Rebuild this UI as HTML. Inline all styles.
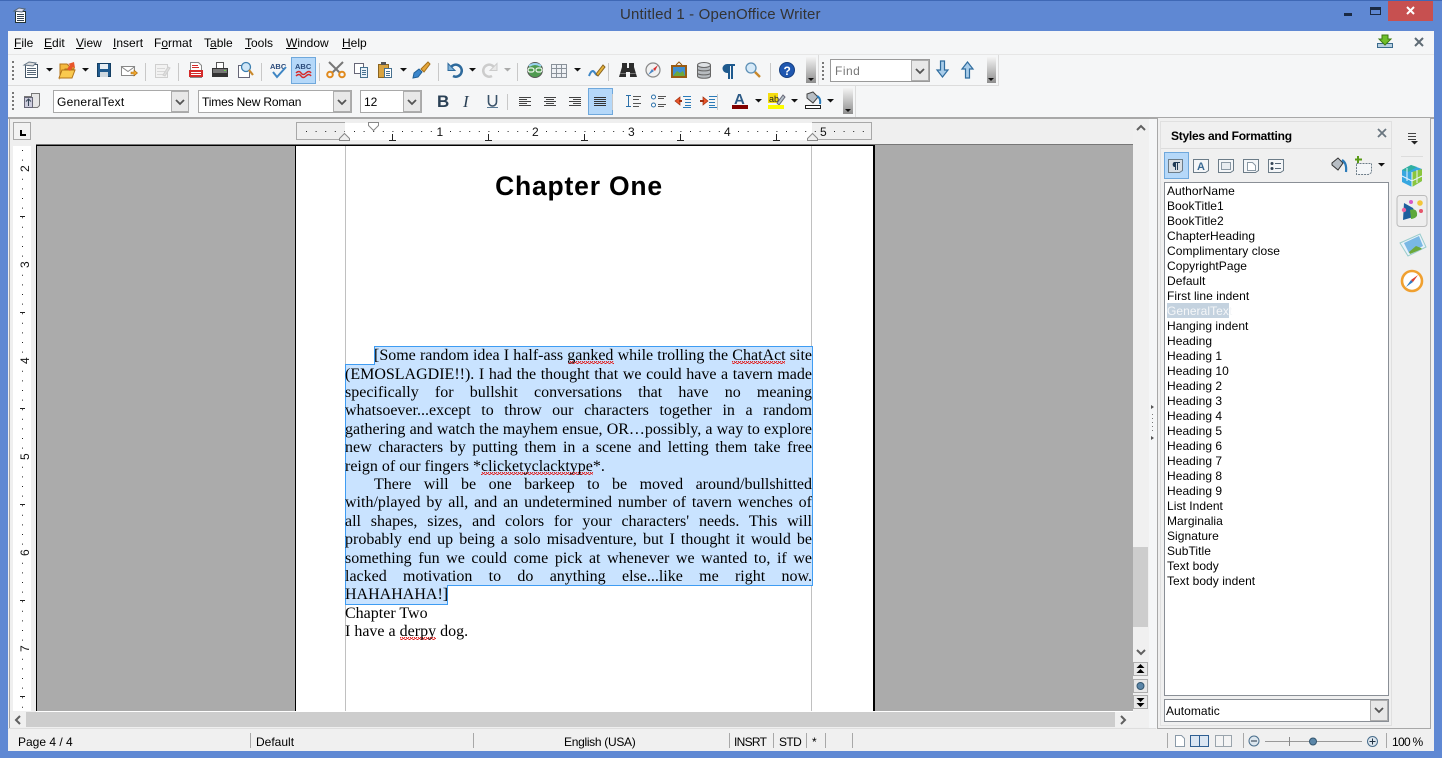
<!DOCTYPE html>
<html><head><meta charset="utf-8"><title>Untitled 1 - OpenOffice Writer</title>
<style>
html,body{margin:0;padding:0;width:1442px;height:758px;overflow:hidden;background:#5f88d3}
*{box-sizing:border-box}
div,span,svg{position:absolute}
span.n{position:static}
.t{font:12px/15px "Liberation Sans",sans-serif;color:#000;white-space:nowrap}
.m{top:36px}
u{text-decoration:underline}
.l{position:absolute;left:345px;width:467px;font:16px/18px "Liberation Serif",serif;color:#000;white-space:nowrap}
.j{white-space:normal;text-align:justify;text-align-last:justify}
.s{left:1167px;font:12px/15px "Liberation Sans",sans-serif;letter-spacing:.05px;white-space:nowrap;color:#000}
.combo{background:#fff;border:1px solid #a9a9a9;font:12px/22px "Liberation Sans",sans-serif;padding-left:3px;white-space:nowrap}
.arrowbox{width:18px;background:#e8e8e8;border:1px solid #adadad}
.hd{background:linear-gradient(#f4f4f4,#8e8e8e)}
.sb{top:733px;height:15px;width:1px;background:#a8a8a8}
.grip{width:2px;border-left:2px dotted #777}
</style></head><body>
<!-- title -->
<div style="left:0;top:0;width:1442px;height:1px;background:#3f68b5"></div>
<svg style="left:12px;top:6px" width="16" height="18" viewBox="0 0 16 18"><path d="M3.500 5.500h10v11h-10z" fill="#fff" stroke="#233"/><path d="M5 8.500h7M5 10.500h7M5 12.500h7M5 14.500h7" stroke="#345"/><path d="M2 5l5-3 6 1-3 3z" fill="#dde" stroke="#567"/></svg>
<div class="t" style="left:620px;top:6px;font-size:15px;line-height:18px;color:#333;letter-spacing:.15px">Untitled 1 - OpenOffice Writer</div>
<div style="left:1344px;top:13px;width:8px;height:3px;background:#1a2a44"></div>
<div style="left:1370px;top:7px;height:8px;border:1.5px solid #1a2a44;border-top-width:3px;width:11px"></div>
<div style="left:1388px;top:1px;width:45px;height:20px;background:#c75050"></div>
<svg style="left:1405px;top:5px" width="12" height="12" viewBox="0 0 12 12"><path d="M2 2l7 7M9 2l-7 7" stroke="#fff" stroke-width="2"/></svg>

<!-- client -->
<div style="left:8px;top:31px;width:1426px;height:720px;background:#f0f0f0"></div>
<div style="left:8px;top:31px;width:1426px;height:23px;background:#f5f6f7"></div>
<div style="left:8px;top:54px;width:1426px;height:1px;background:#e6e6e6"></div>
<div style="left:8px;top:55px;width:1426px;height:62px;background:#f5f6f7"></div>
<div style="left:8px;top:85px;width:990px;height:1px;background:#dcdcdc"></div>
<div style="left:818px;top:55px;width:1px;height:30px;background:#dcdcdc"></div>
<div style="left:998px;top:55px;width:1px;height:31px;background:#dcdcdc"></div>
<div style="left:855px;top:86px;width:1px;height:31px;background:#dcdcdc"></div>
<div style="left:8px;top:117px;width:1426px;height:2px;background:#a8a8a8"></div>

<!-- menu -->
<div class="t m" style="left:14px"><u>F</u>ile</div>
<div class="t m" style="left:44px"><u>E</u>dit</div>
<div class="t m" style="left:76px"><u>V</u>iew</div>
<div class="t m" style="left:113px"><u>I</u>nsert</div>
<div class="t m" style="left:154px">F<u>o</u>rmat</div>
<div class="t m" style="left:204px">T<u>a</u>ble</div>
<div class="t m" style="left:245px"><u>T</u>ools</div>
<div class="t m" style="left:286px"><u>W</u>indow</div>
<div class="t m" style="left:342px"><u>H</u>elp</div>
<svg style="left:1376px;top:33px" width="18" height="16" viewBox="0 0 18 16"><path d="M1.500 10.500h15v4h-15z" fill="#b8cfe0" stroke="#3a6a8c"/><path d="M6 2h6v4h3l-6 6-6-6h3z" fill="#6fbf2a" stroke="#3d7a12"/></svg>
<svg style="left:1414px;top:37px" width="10" height="10" viewBox="0 0 10 10"><path d="M1 1l8 8M9 1l-8 8" stroke="#5f6b75" stroke-width="2"/></svg>

<!-- toolbar 1 -->
<div class="grip" style="left:12px;top:61px;height:19px"></div>
<svg style="left:0;top:55px" width="1000" height="30" viewBox="0 55 1000 30">
<path d="M25.500 64.500h12v13h-12z" fill="#fff" stroke="#456"/><path d="M27 68.500h9M27 70.500h9M27 72.500h9M27 74.500h9" stroke="#567"/><path d="M24 65l5-3 7 1-3 3z" fill="#ddd" stroke="#678"/>
<path d="M46 68h7l-3.500 3.500z" fill="#111"/>
<path d="M60 64h7l2 2h5v3H65l-5 9z" fill="#f4b93e" stroke="#b3741a"/><path d="M62 70h13l-3 8H59z" fill="#f9c94f" stroke="#b3741a"/><path d="M67 69l3-4-2-1 6-2 1 6-2-1-3 4z" fill="#e8552a"/>
<path d="M82 68h7l-3.500 3.500z" fill="#111"/>
<path d="M97.500 63.500h13v13h-13z" fill="#1f5a8e" stroke="#143e63"/><path d="M100 64h8v5h-8z" fill="#e8eef3"/><path d="M100 72h8v5h-8z" fill="#cfd8df"/>
<path d="M121.500 66.500h13v9h-13z" fill="#fff" stroke="#888"/><path d="M121 66.500l7 5 7-5" fill="none" stroke="#888"/><path d="M131 72h3v-2l3.500 3-3.500 3v-2h-3z" fill="#f0a830" stroke="#a86a10" stroke-width=".6"/>
<path d="M145.500 63v18" stroke="#c8c8c8"/>
<path d="M155.500 64.500h12v13h-12z" fill="#f2f2f2" stroke="#cfcfcf"/><path d="M157 68.500h8M157 71.500h8M157 74.500h6" stroke="#d8d8d8"/><path d="M163 75l5-8 2 1-5 8z" fill="#dfdfdf" stroke="#cfcfcf"/>
<path d="M178.500 63v18" stroke="#c8c8c8"/>
<path d="M190.500 62.500h8l3 3v12h-11z" fill="#fff" stroke="#888"/><path d="M189 70h14v7h-14z" fill="#d42a2a"/><path d="M192 65.500h6M192 67.500h7" stroke="#d42a2a"/><path d="M191 72.500h10M191 74.500h10" stroke="#fff"/>
<path d="M216.500 62.500h7v6h-7z" fill="#fff" stroke="#555"/><path d="M212.500 68.500h15v8h-15z" fill="#777" stroke="#333"/><path d="M213 73h14v4h-14z" fill="#333"/><path d="M224 70h2v1h-2z" fill="#6ad04a"/>
<path d="M238.500 65.500h9l2 2v10h-11z" fill="#fff" stroke="#667"/><circle cx="246" cy="67" r="4.500" fill="#cfe6f7" stroke="#3c7fb1" stroke-width="1.300"/><path d="M249 70l4 5" stroke="#c9882b" stroke-width="2.200"/>
<path d="M261.500 63v18" stroke="#c8c8c8"/>
<text x="270" y="69" font-family="Liberation Sans" font-size="7.500" font-weight="bold" fill="#2a4a7a">ABC</text><path d="M273 72l4 5 9-10" fill="none" stroke="#3f86c4" stroke-width="2"/>
<rect x="291.500" y="57.500" width="24" height="26" fill="#b5d8f9" stroke="#6fa8dc"/>
<text x="295" y="69" font-family="Liberation Sans" font-size="7.500" font-weight="bold" fill="#2a4a7a">ABC</text><path d="M296 73q3-3 5 0t5 0 5 0M296 76q3-3 5 0t5 0 5 0" fill="none" stroke="#d62a2a" stroke-width="1.500"/>
<path d="M319.500 63v18" stroke="#c8c8c8"/>
<path d="M329 62l11 11M343 62l-11 11" stroke="#777" stroke-width="2"/><circle cx="330" cy="74.500" r="2.800" fill="none" stroke="#e08a1e" stroke-width="2"/><circle cx="342" cy="74.500" r="2.800" fill="none" stroke="#e08a1e" stroke-width="2"/>
<path d="M354.500 63.500h9v10h-9z" fill="#fff" stroke="#667"/><path d="M360.500 67.500h7v10h-7z" fill="#eaf2fa" stroke="#46708f"/><path d="M362 70.500h4M362 72.500h4M362 74.500h4" stroke="#46708f"/>
<path d="M378.500 64.500h10v13h-10z" fill="#d9a441" stroke="#8a6420"/><path d="M381 62h5v3h-5z" fill="#555"/><path d="M384.500 68.500h7v9h-7z" fill="#fff" stroke="#46708f"/><path d="M386 71.500h4M386 73.500h4M386 75.500h4" stroke="#46708f"/>
<path d="M400 68h7l-3.500 3.500z" fill="#111"/>
<path d="M414 73l5-4 3 3-4 5-5 1z" fill="#3b86cc" stroke="#1f5f96"/><path d="M421 69l7-7 2 2-6 8z" fill="#e5a63a" stroke="#a5701a"/>
<path d="M438.500 63v18" stroke="#c8c8c8"/>
<path d="M450 69a6 6 0 1 1 3 7" fill="none" stroke="#2e6a9c" stroke-width="2.500"/><path d="M448 63.500v7h7z" fill="#7fb3da" stroke="#2e6a9c"/>
<path d="M469 68h7l-3.500 3.500z" fill="#111"/>
<path d="M495 69a6 6 0 1 0-3 7" fill="none" stroke="#ccc" stroke-width="2.500"/><path d="M497 63.500v7h-7z" fill="#e8e8e8" stroke="#ccc"/>
<path d="M504 68h7l-3.500 3.500z" fill="#aaa"/>
<path d="M517.500 63v18" stroke="#c8c8c8"/>
<circle cx="535" cy="70" r="7.500" fill="#4f9a50" stroke="#555"/><path d="M529 66q6-4 12 0" fill="none" stroke="#9ad2ee" stroke-width="2"/><rect x="528" y="68" width="6" height="4" rx="2" fill="none" stroke="#e8f4e8" stroke-width="1.300"/><rect x="536" y="68" width="6" height="4" rx="2" fill="none" stroke="#e8f4e8" stroke-width="1.300"/>
<path d="M551.500 64.500h15v13h-15z" fill="#eef1f5" stroke="#8a929a"/><path d="M551 68.500h16M551 73.500h16M556.500 64v14M561.500 64v14" stroke="#8a929a"/>
<path d="M574 68h7l-3.500 3.500z" fill="#111"/>
<path d="M589 76q3-8 6-3t4-2" fill="none" stroke="#3d86c6" stroke-width="2"/><path d="M596 74l7-9 2 2-7 9z" fill="#e6b43c" stroke="#8a6420"/>
<path d="M608.500 63v18" stroke="#c8c8c8"/>
<path d="M622 63h5v5h2v-5h5v4l3 10h-7v-5h-4v5h-7l3-10z" fill="#2d2d2d"/><path d="M620 73.500h6M630 73.500h6" stroke="#777"/>
<circle cx="653" cy="70" r="7" fill="#f1f1f1" stroke="#888" stroke-width="1.200"/><path d="M648 75l4-6 2 2z" fill="#4a86c5"/><path d="M658 65l-5 4 2 2z" fill="#d83030"/>
<path d="M672 66h14v11h-14z" fill="#3f8fd0" stroke="#9a5b12" stroke-width="2"/><path d="M673 76l4-5 3 2 3-2 2 5z" fill="#6da83a"/><path d="M676 65l3-3 3 3" fill="none" stroke="#9a5b12"/>
<path d="M697.500 65v11c0 3 13 3 13 0V65" fill="#b8bcc0" stroke="#666"/><ellipse cx="704" cy="65" rx="6.500" ry="2.500" fill="#dfe2e5" stroke="#666"/><path d="M697.500 69c0 2.500 13 2.500 13 0M697.500 73c0 2.500 13 2.500 13 0" fill="none" stroke="#666"/>
<path d="M735 64h-8a4.500 4.500 0 0 0 0 9h1v6h2V66h1v13h2V66h2z" fill="#1f5a8e"/>
<circle cx="751" cy="68" r="5" fill="#d5e9f8" stroke="#5d8fb5" stroke-width="1.300"/><path d="M755 72l5 5" stroke="#c9882b" stroke-width="2.400"/>
<path d="M770.500 63v18" stroke="#c8c8c8"/>
<circle cx="787" cy="70" r="7.500" fill="#1f57b0" stroke="#153e80"/><text x="783.500" y="75" font-family="Liberation Sans" font-size="12" font-weight="bold" fill="#fff">?</text>
</svg>
<div class="hd" style="left:806px;top:57px;width:10px;height:26px"></div>
<svg style="left:807px;top:77px" width="8" height="5"><path d="M1 1h6l-3 3z" fill="#111"/></svg>
<div class="grip" style="left:822px;top:62px;height:18px"></div>
<div class="combo" style="left:830px;top:59px;width:100px;height:23px;border-color:#9a9a9a;color:#777;letter-spacing:.5px;padding-left:4px">Find</div>
<div class="arrowbox" style="left:911px;top:60px;height:21px"></div>
<svg style="left:915px;top:68px" width="10" height="7"><path d="M1 1l4 4 4-4" fill="none" stroke="#555" stroke-width="1.800"/></svg>
<svg style="left:935px;top:60px" width="44" height="20" viewBox="0 0 44 20"><path d="M5.500 1h4v9h3.500l-5.500 7-5.500-7h3.500z" fill="#a9cdea" stroke="#2f6c9e" stroke-width="1.200"/><path d="M30.500 18h4V9H38L32.500 2 27 9h3.500z" fill="#a9cdea" stroke="#2f6c9e" stroke-width="1.200"/></svg>
<div class="hd" style="left:987px;top:57px;width:9px;height:26px"></div>
<svg style="left:987px;top:77px" width="8" height="5"><path d="M1 1h6l-3 3z" fill="#111"/></svg>

<!-- toolbar 2 -->
<div class="grip" style="left:12px;top:92px;height:18px"></div>
<svg style="left:0;top:86px" width="860" height="31" viewBox="0 86 860 31">
<path d="M24.500 96.500h7v-3h8v12l-2 2h-13z" fill="#e6e6e6" stroke="#777"/><path d="M24.500 97.500h8v10h-8z" fill="#ccd" stroke="#667"/><path d="M28.500 99v7M26 101.500l2.500-2.500 2.500 2.500" stroke="#345" fill="none"/>
<text x="437" y="107" font-family="Liberation Sans" font-size="17" font-weight="bold" fill="#2a4055">B</text>
<text x="463" y="107" font-family="Liberation Serif" font-size="17" font-style="italic" fill="#2a4055">I</text>
<path d="M488.500 95v7a4 4 0 0 0 8 0v-7" fill="none" stroke="#3a5268" stroke-width="1.600"/><path d="M487 107.500h11" stroke="#5a7a95"/>
<path d="M507.500 94v16" stroke="#c8c8c8"/>
<path d="M519 97.500h12M519 99.500h8M519 101.500h12M519 103.500h8M519 105.500h12" stroke="#444"/>
<path d="M544 97.500h12M546 99.500h8M544 101.500h12M546 103.500h8M544 105.500h12" stroke="#444"/>
<path d="M569 97.500h12M573 99.500h8M569 101.500h12M573 103.500h8M569 105.500h12" stroke="#444"/>
<rect x="588.500" y="88.500" width="24" height="26" fill="#b5d8f9" stroke="#6fa8dc"/>
<path d="M594 97.500h12M594 99.500h12M594 101.500h12M594 103.500h12M594 105.500h12" stroke="#333"/>
<path d="M612.500 94v16" stroke="#c8c8c8"/>
<path d="M626 95.500h5M626 106.500h5M628.500 96v10" stroke="#2a6fa8"/><path d="M633 96.500h8M633 99.500h6M633 103.500h8M633 106.500h6" stroke="#555"/>
<circle cx="653.500" cy="97" r="2" fill="#fff" stroke="#2a6fa8"/><circle cx="653.500" cy="105" r="2" fill="#fff" stroke="#2a6fa8"/><path d="M658 96.500h8M658 98.500h6M658 104.500h8M658 106.500h6" stroke="#555"/>
<path d="M675 101l5-4v8z" fill="#e8552a" stroke="#a03010" stroke-width=".7"/><path d="M679 101h3" stroke="#a03010" stroke-width="2"/><path d="M683 96.500h8M685 99.500h6M685 102.500h6M685 105.500h6M683 107.500h8" stroke="#2a7ab8"/>
<path d="M708 101l-5-4v8z" fill="#e8552a" stroke="#a03010" stroke-width=".7"/><path d="M700 101h4" stroke="#a03010" stroke-width="2"/><path d="M709 96.500h8M709 99.500h6M709 102.500h6M709 105.500h6M709 107.500h8" stroke="#2a7ab8"/>
<path d="M717.500 94v16" stroke="#c8c8c8"/>
<text x="734" y="104" font-family="Liberation Sans" font-size="15" font-weight="bold" fill="#2c5a86">A</text><path d="M732 105h16v4h-16z" fill="#800000"/>
<path d="M755 99h7l-3.500 3.500z" fill="#111"/>
<path d="M768 93h10v10h-10z" fill="#f5dc10"/><text x="769" y="102" font-family="Liberation Sans" font-size="9" fill="#222">ab</text><path d="M777 103l6-8 2 2-6 8z" fill="#b5c0c8" stroke="#667"/><path d="M768 105h16v4h-16z" fill="#fcfc00"/>
<path d="M791 99h7l-3.500 3.500z" fill="#111"/>
<path d="M807 94l6-2 5 5-5 6-6-5z" fill="#b8bec4" stroke="#444"/><path d="M817 96q4 2 3 8" fill="none" stroke="#2a7ab8" stroke-width="2"/><path d="M805.500 105.500h15v3h-15z" fill="#fff" stroke="#222"/>
<path d="M827 99h7l-3.500 3.500z" fill="#111"/>
</svg>
<div class="hd" style="left:843px;top:88px;width:10px;height:26px"></div>
<svg style="left:844px;top:108px" width="8" height="5"><path d="M1 1h6l-3 3z" fill="#111"/></svg>

<div class="combo" style="left:53px;top:90px;width:136px;height:23px;letter-spacing:.25px">GeneralText</div>
<div class="combo" style="left:198px;top:90px;width:154px;height:23px;letter-spacing:-.15px">Times New Roman</div>
<div class="combo" style="left:360px;top:90px;width:62px;height:23px">12</div>
<div class="arrowbox" style="left:171px;top:91px;height:21px"></div>
<div class="arrowbox" style="left:333px;top:91px;height:21px"></div>
<div class="arrowbox" style="left:403px;top:91px;height:21px"></div>
<svg style="left:175px;top:99px" width="10" height="7"><path d="M1 1l4 4 4-4" fill="none" stroke="#555" stroke-width="1.800"/></svg>
<svg style="left:337px;top:99px" width="10" height="7"><path d="M1 1l4 4 4-4" fill="none" stroke="#555" stroke-width="1.800"/></svg>
<svg style="left:407px;top:99px" width="10" height="7"><path d="M1 1l4 4 4-4" fill="none" stroke="#555" stroke-width="1.800"/></svg>

<!-- workspace -->
<div style="left:10px;top:119px;width:1138px;height:609px;background:#efefef"></div>
<div style="left:9px;top:119px;width:1px;height:609px;background:#a8a8a8"></div>
<div style="left:1149px;top:119px;width:8px;height:609px;background:#f5f6f7"></div>
<div style="left:13px;top:122px;width:18px;height:18px;background:#f2f2f2;border:1px solid #a8a8a8"></div>
<svg style="left:13px;top:122px" width="18" height="18"><path d="M7 8h2v4h4v2H7z" fill="#000"/></svg>

<!-- h ruler -->
<div style="left:296px;top:122px;width:49px;height:18px;background:#efefef;border:1px solid #a8a8a8;border-right:0"></div>
<div style="left:812px;top:122px;width:60px;height:18px;background:#efefef;border:1px solid #a8a8a8;border-left:0"></div>
<div style="left:345px;top:123px;width:467px;height:17px;background:#fff"></div>
<svg style="left:296px;top:120px" width="580" height="26" viewBox="296 120 580 26">
<line x1="306" y1="131.500" x2="345" y2="131.500" stroke="#222" stroke-dasharray="1 8.600"/>
<line x1="354" y1="131.500" x2="866" y2="131.500" stroke="#222" stroke-dasharray="1 8.600"/>
<path d="M392.500 134v6M389 140.500h7M488.500 134v6M485 140.500h7M584.500 134v6M581 140.500h7M680.500 134v6M677 140.500h7M776.500 134v6M773 140.500h7" fill="none" stroke="#222"/>
<path d="M339.500 140.500v-2l5-5 5 5v2z" fill="#efefef" stroke="#888"/>
<path d="M807.500 140.500v-2l5-5 5 5v2z" fill="#efefef" stroke="#888"/>
<path d="M368.500 122.500h10v3l-5 5-5-5z" fill="#fff" stroke="#888"/>
<rect x="434" y="125" width="11" height="14" fill="#fff"/><rect x="530" y="125" width="11" height="14" fill="#fff"/><rect x="626" y="125" width="11" height="14" fill="#fff"/><rect x="722" y="125" width="11" height="14" fill="#fff"/><rect x="818" y="125" width="11" height="14" fill="#efefef"/>
<text x="436.500" y="136" font-family="Liberation Sans" font-size="12" fill="#111">1</text>
<text x="532" y="136" font-family="Liberation Sans" font-size="12" fill="#111">2</text>
<text x="628" y="136" font-family="Liberation Sans" font-size="12" fill="#111">3</text>
<text x="724" y="136" font-family="Liberation Sans" font-size="12" fill="#111">4</text>
<text x="820" y="136" font-family="Liberation Sans" font-size="12" fill="#111">5</text>
</svg>

<!-- v ruler -->
<div style="left:13px;top:146px;width:18px;height:565px;background:#fff"></div>
<svg style="left:13px;top:146px" width="18" height="565" viewBox="13 146 18 565">
<line x1="22.500" y1="150" x2="22.500" y2="711" stroke="#222" stroke-dasharray="1 8.600"/>
<path d="M20 216.500h5M20 312.500h5M20 408.500h5M20 504.500h5M20 600.500h5M20 696.500h5" stroke="#222"/>
<rect x="16" y="162" width="14" height="12" fill="#fff"/><rect x="16" y="258" width="14" height="12" fill="#fff"/><rect x="16" y="354" width="14" height="12" fill="#fff"/><rect x="16" y="450" width="14" height="12" fill="#fff"/><rect x="16" y="546" width="14" height="12" fill="#fff"/><rect x="16" y="642" width="14" height="12" fill="#fff"/>
<text transform="translate(29 172) rotate(-90)" font-family="Liberation Sans" font-size="12" fill="#111">2</text>
<text transform="translate(29 268) rotate(-90)" font-family="Liberation Sans" font-size="12" fill="#111">3</text>
<text transform="translate(29 364) rotate(-90)" font-family="Liberation Sans" font-size="12" fill="#111">4</text>
<text transform="translate(29 460) rotate(-90)" font-family="Liberation Sans" font-size="12" fill="#111">5</text>
<text transform="translate(29 556) rotate(-90)" font-family="Liberation Sans" font-size="12" fill="#111">6</text>
<text transform="translate(29 652) rotate(-90)" font-family="Liberation Sans" font-size="12" fill="#111">7</text>
</svg>

<!-- doc -->
<div style="left:36px;top:144px;width:1097px;height:567px;background:#ababab"></div>
<div style="left:36px;top:144px;width:1097px;height:1px;background:#777"></div>
<div style="left:36px;top:145px;width:839px;height:1px;background:#000"></div>
<div style="left:36px;top:146px;width:1px;height:565px;background:#000"></div>
<div style="left:295px;top:146px;width:578px;height:565px;background:#fff;border-left:1px solid #000"></div>
<div style="left:873px;top:145px;width:2px;height:566px;background:#000"></div>
<div style="left:36px;top:711px;width:1097px;height:1px;background:#fff"></div>
<div style="left:345px;top:146px;width:1px;height:565px;background:#c0c0c0"></div>
<div style="left:811px;top:146px;width:1px;height:565px;background:#c0c0c0"></div>
<svg style="left:340px;top:340px" width="480" height="310" viewBox="340 340 480 310">
<defs><pattern id="w" width="4" height="3" patternUnits="userSpaceOnUse"><path d="M0 2.500L1 .5 2 .5 3 2.500 4 2.500" fill="none" stroke="#e02020" stroke-width="1"/></pattern></defs>
<path d="M374.500 346.500H812.500V585.500H447.500V604.500H345.500V364.500H374.500Z" fill="#c9e3ff" stroke="#3f9cf2"/>
<g transform="translate(0 0)"><rect x="568" y="361" width="46" height="3" fill="url(#w)"/><rect x="732" y="361" width="53" height="3" fill="url(#w)"/><rect x="481" y="472" width="112" height="3" fill="url(#w)"/><rect x="400" y="637" width="36" height="3" fill="url(#w)"/></g>
</svg>
<div style="left:345px;top:171px;width:468px;text-align:center;font:bold 26.500px/30px 'Liberation Sans',sans-serif;color:#000;letter-spacing:.8px;white-space:nowrap">Chapter One</div>
<div class="l j" style="top:347px;left:374px;width:438px">[Some random idea I half-ass ganked while trolling the ChatAct site</div>
<div class="l j" style="top:366px">(EMOSLAGDIE!!). I had the thought that we could have a tavern made</div>
<div class="l j" style="top:384px">specifically for bullshit conversations that have no meaning</div>
<div class="l j" style="top:402px">whatsoever...except to throw our characters together in a random</div>
<div class="l j" style="top:421px">gathering and watch the mayhem ensue, OR…possibly, a way to explore</div>
<div class="l j" style="top:439px">new characters by putting them in a scene and letting them take free</div>
<div class="l" style="top:458px">reign of our fingers *clicketyclacktype*.</div>
<div class="l j" style="top:476px;left:374px;width:438px">There will be one barkeep to be moved around/bullshitted</div>
<div class="l j" style="top:494px">with/played by all, and an undetermined number of tavern wenches of</div>
<div class="l j" style="top:513px">all shapes, sizes, and colors for your characters' needs. This will</div>
<div class="l j" style="top:531px">probably end up being a solo misadventure, but I thought it would be</div>
<div class="l j" style="top:550px">something fun we could come pick at whenever we wanted to, if we</div>
<div class="l j" style="top:568px">lacked motivation to do anything else...like me right now.</div>
<div class="l" style="top:586px">HAHAHAHA!]</div>
<div class="l" style="top:605px">Chapter Two</div>
<div class="l" style="top:623px">I have a derpy dog.</div>

<!-- v scroll -->
<div style="left:1133px;top:119px;width:16px;height:593px;background:#f0f0f0"></div>
<div style="left:1133px;top:547px;width:15px;height:80px;background:#cdcdcd"></div>
<svg style="left:1135px;top:124px" width="12" height="8"><path d="M2 6l4-4 4 4" fill="none" stroke="#606060" stroke-width="2"/></svg>
<svg style="left:1135px;top:648px" width="12" height="8"><path d="M2 2l4 4 4-4" fill="none" stroke="#606060" stroke-width="2"/></svg>
<div style="left:1133px;top:662px;width:15px;height:14px;background:#e8e8e8;border:1px solid #adadad"></div>
<div style="left:1133px;top:679px;width:15px;height:14px;background:#e8e8e8;border:1px solid #adadad"></div>
<div style="left:1133px;top:695px;width:15px;height:14px;background:#e8e8e8;border:1px solid #adadad"></div>
<svg style="left:1133px;top:661px" width="15" height="50" viewBox="0 0 15 50"><path d="M7.500 3l4 4h-8zM7.500 8l4 4h-8z" fill="#000"/><circle cx="7.500" cy="25" r="3.500" fill="#5b86a8" stroke="#33566f"/><path d="M3.500 37h8l-4 4zM3.500 42h8l-4 4z" fill="#000"/></svg>

<!-- h scroll -->
<div style="left:10px;top:712px;width:1138px;height:15px;background:#f0f0f0"></div>
<div style="left:26px;top:712px;width:1089px;height:15px;background:#cdcdcd"></div>
<svg style="left:14px;top:715px" width="9" height="10"><path d="M6 1L2 5l4 4" fill="none" stroke="#606060" stroke-width="2"/></svg>
<svg style="left:1119px;top:715px" width="9" height="10"><path d="M2 1l4 4-4 4" fill="none" stroke="#606060" stroke-width="2"/></svg>
<div style="left:8px;top:728px;width:1148px;height:1px;background:#dedede"></div>

<!-- sash -->
<svg style="left:1150px;top:404px" width="6" height="40"><path d="M1 1l3 2-3 2zM1 32l3 2-3 2z" fill="#555"/><path d="M2.500 10v1M2.500 14v1M2.500 18v1M2.500 22v1M2.500 26v1" stroke="#777"/></svg>

<!-- sidebar -->
<div style="left:1157px;top:118px;width:274px;height:611px;background:#f0f0f0;border-left:1px solid #a8a8a8;border-right:1px solid #a8a8a8;border-bottom:1px solid #a8a8a8"></div>
<div style="left:1160px;top:121px;width:232px;height:605px;background:#f0f0f0;border:1px solid #e0e0e0"></div>
<div style="left:1161px;top:148px;width:230px;height:1px;background:#dcdcdc"></div>
<div class="t" style="left:1171px;top:129px;font-weight:bold;letter-spacing:-.25px">Styles and Formatting</div>
<svg style="left:1377px;top:128px" width="10" height="10"><path d="M1 1l8 8M9 1l-8 8" stroke="#6a7680" stroke-width="1.800"/></svg>
<div style="left:1164px;top:152px;width:25px;height:27px;background:#b5d8f9;border:1px solid #6fa8dc"></div>
<svg style="left:1160px;top:150px" width="240" height="30" viewBox="1160 150 240 30">
<g fill="#f4f6f8" stroke="#6c7c88"><path d="M1168.500 159.500h14v11l-3 2h-11z" fill="#d8dee4"/><path d="M1193.500 159.500h15v11l-3 2h-12z"/><path d="M1218.500 159.500h15v11l-3 2h-12z"/><path d="M1243.500 159.500h15v11l-3 2h-12z"/><path d="M1268.500 159.500h15v11l-3 2h-12z"/></g>
<path d="M1180 162h-6a3 3 0 0 0 0 5h1v3h1v-7h1v7h1v-7h2z" fill="#1f3a55"/>
<text x="1197" y="170" font-family="Liberation Sans" font-size="11" font-weight="bold" fill="#3a6a94">A</text>
<path d="M1221.500 162.500h9v7h-9z" fill="#e8ecf0" stroke="#8a98a4"/>
<path d="M1247.500 162.500h5l3 3v5h-8z" fill="#fff" stroke="#8a98a4"/>
<circle cx="1272" cy="163.500" r="1.500" fill="#345"/><circle cx="1272" cy="168.500" r="1.500" fill="#345"/><path d="M1275 163.500h6M1275 168.500h6" stroke="#567"/>
<path d="M1332 163l6-5 5 5-5 7-6-5z" fill="#b8bec4" stroke="#333"/><path d="M1342 160q5 3 4 12" fill="none" stroke="#2a7ab8" stroke-width="2.200"/>
<path d="M1356.500 163.500h15v9l-3 2h-12z" fill="#f4f6f8" stroke="#6c7c88" stroke-dasharray="2 1"/><path d="M1358 156v7M1355 159.500h7" stroke="#5a9a18" stroke-width="2" fill="none"/>
<path d="M1378 163h7l-3.500 3.500z" fill="#111"/>
</svg>
<div style="left:1164px;top:182px;width:225px;height:514px;background:#fff;border:1px solid #8a8f96"></div>
<div style="left:1167px;top:303px;width:62px;height:15px;background:#c4d2df"></div>
<div class="s" style="top:184px">AuthorName</div>
<div class="s" style="top:199px">BookTitle1</div>
<div class="s" style="top:214px">BookTitle2</div>
<div class="s" style="top:229px">ChapterHeading</div>
<div class="s" style="top:244px">Complimentary close</div>
<div class="s" style="top:259px">CopyrightPage</div>
<div class="s" style="top:274px">Default</div>
<div class="s" style="top:289px">First line indent</div>
<div class="s" style="top:304px;color:#f4f6f8">GeneralText</div>
<div class="s" style="top:319px">Hanging indent</div>
<div class="s" style="top:334px">Heading</div>
<div class="s" style="top:349px">Heading 1</div>
<div class="s" style="top:364px">Heading 10</div>
<div class="s" style="top:379px">Heading 2</div>
<div class="s" style="top:394px">Heading 3</div>
<div class="s" style="top:409px">Heading 4</div>
<div class="s" style="top:424px">Heading 5</div>
<div class="s" style="top:439px">Heading 6</div>
<div class="s" style="top:454px">Heading 7</div>
<div class="s" style="top:469px">Heading 8</div>
<div class="s" style="top:484px">Heading 9</div>
<div class="s" style="top:499px">List Indent</div>
<div class="s" style="top:514px">Marginalia</div>
<div class="s" style="top:529px">Signature</div>
<div class="s" style="top:544px">SubTitle</div>
<div class="s" style="top:559px">Text body</div>
<div class="s" style="top:574px">Text body indent</div>
<div class="combo" style="left:1164px;top:699px;width:225px;height:23px;border-color:#8a8f96;padding-left:1px;letter-spacing:.05px">Automatic</div>
<div class="arrowbox" style="left:1370px;top:700px;height:21px"></div>
<svg style="left:1374px;top:707px" width="10" height="7"><path d="M1 1l4 4 4-4" fill="none" stroke="#555" stroke-width="1.800"/></svg>

<!-- sidebar tabs -->
<svg style="left:1393px;top:122px" width="38" height="180" viewBox="1393 122 38 180">
<path d="M1408 133.500h8M1408 136.500h8M1408 139.500h8" stroke="#444"/><path d="M1411 141h7l-3.500 3.500z" fill="#222"/>
<path d="M1401 156.500h22" stroke="#dcdcdc"/>
<path d="M1402 170l9-5 11 4v12l-10 6-10-5z" fill="#37a7e0"/><path d="M1412 172l10-3v12l-10 6z" fill="#8bc63e"/><path d="M1402 170l9-5 6 2-9 5z" fill="#30b0a0"/><path d="M1407 168v13M1412 172v15M1417 170v13M1402 176l10 5 10-5" stroke="#e8f4ff" fill="none"/>
<rect x="1397" y="195.500" width="30" height="31" rx="3" fill="#eee" stroke="#bbb"/>
<path d="M1404 203l9 5 4 8-14 4z" fill="#1d5f9e"/><path d="M1410 210q6-2 7 3t-6 6z" fill="#5ea83a"/><circle cx="1420" cy="203" r="2.800" fill="#f3c63a"/><circle cx="1411" cy="202" r="2" fill="#d857c8"/><circle cx="1404" cy="210" r="2.200" fill="#ee66a0"/><circle cx="1421" cy="211" r="2" fill="#e6556a"/>
<path d="M1400 243l20-9 6 13-18 9z" fill="#e8f2fa" stroke="#9cc"/><path d="M1404 243l15-7 4 10-14 7z" fill="#79b8e4"/><path d="M1409 252l7-6 5 2 1 1-12 5z" fill="#6da83a"/>
<circle cx="1412" cy="281" r="10" fill="#fff" stroke="#f0a030" stroke-width="2.600"/><path d="M1406 287l5-7 2 2z" fill="#2f7ac2"/><path d="M1418 275l-7 5 2 2z" fill="#d94030"/>
</svg>

<!-- status bar -->
<div class="t" style="left:18px;top:735px">Page 4 / 4</div>
<div class="sb" style="left:250px"></div>
<div class="t" style="left:256px;top:735px">Default</div>
<div class="sb" style="left:473px"></div>
<div class="t" style="left:564px;top:735px;letter-spacing:-.3px">English (USA)</div>
<div class="sb" style="left:729px"></div>
<div class="t" style="left:734px;top:735px;letter-spacing:-.7px">INSRT</div>
<div class="sb" style="left:773px"></div>
<div class="t" style="left:779px;top:735px;letter-spacing:-.6px">STD</div>
<div class="sb" style="left:806px"></div>
<div class="t" style="left:812px;top:735px">*</div>
<div class="sb" style="left:825px"></div>
<div class="sb" style="left:852px"></div>
<div class="sb" style="left:1167px"></div>
<div class="sb" style="left:1243px"></div>
<div class="sb" style="left:1386px"></div>
<svg style="left:1170px;top:732px" width="220" height="20" viewBox="1170 732 220 20">
<path d="M1175.500 735.500h6l3 3v8h-9z" fill="#fff" stroke="#8a9aa8"/>
<path d="M1190.500 735.500h9v11h-9zM1199.500 735.500h9v11h-9z" fill="#dbe6f2" stroke="#2f5f92"/>
<path d="M1215.500 735.500h8v11h-8zM1223.500 735.500h8v11h-8z" fill="#f4f4f4" stroke="#9aa4ac"/>
<circle cx="1254" cy="741" r="5" fill="#dce6ee" stroke="#4a6e8c"/><path d="M1251 741h6" stroke="#234"/>
<path d="M1265 741.500h97" stroke="#999"/><path d="M1289.500 737v9" stroke="#888"/>
<circle cx="1313" cy="741.500" r="3.500" fill="#5b86a8" stroke="#33566f"/>
<circle cx="1372.500" cy="741.500" r="5" fill="#dce6ee" stroke="#4a6e8c"/><path d="M1369.500 741.500h6M1372.500 738.500v6" stroke="#234"/>
</svg>
<div class="t" style="left:1392px;top:735px;letter-spacing:-.7px">100 %</div>
</body></html>
